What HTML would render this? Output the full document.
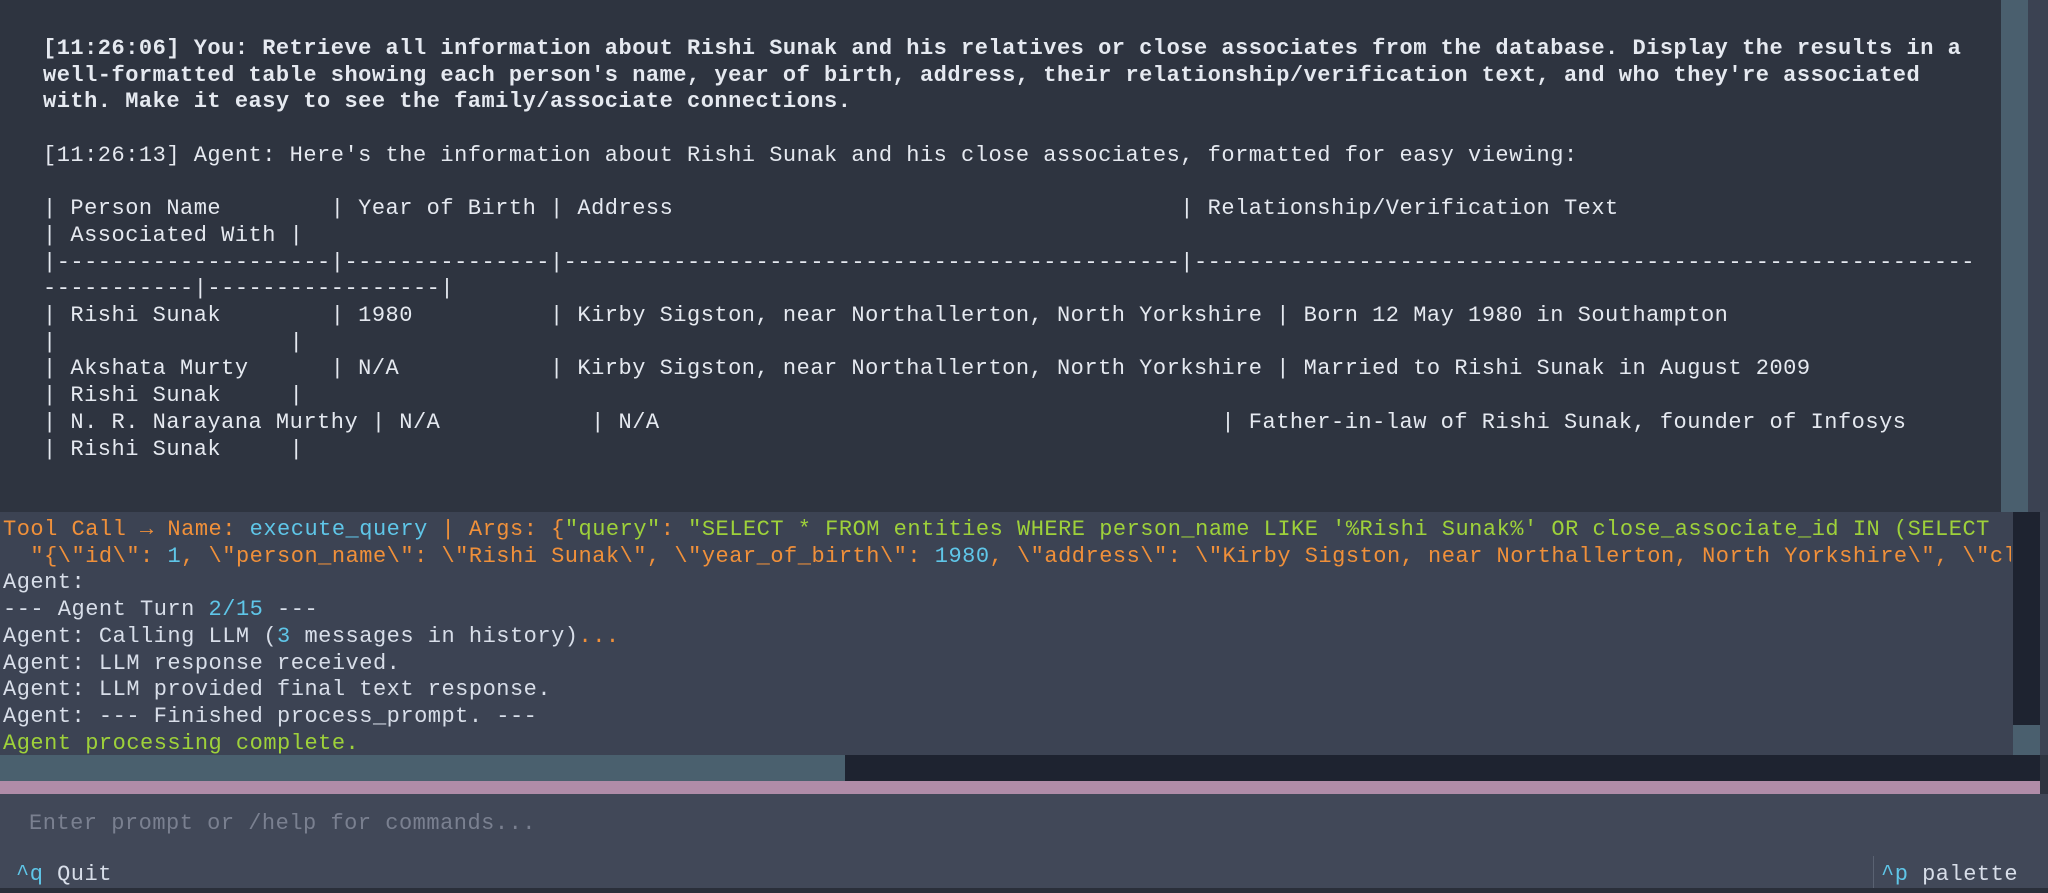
<!DOCTYPE html>
<html><head><meta charset="utf-8"><style>
*{margin:0;padding:0;box-sizing:border-box}
body{width:2048px;height:893px;overflow:hidden;background:#2e3440;font-family:"Liberation Mono","DejaVu Sans Mono",monospace;font-size:22px;letter-spacing:0.5px;color:#d8dee9;position:relative}
pre{font:inherit;white-space:pre;line-height:26.7px;overflow:hidden}
#top{position:absolute;left:0;top:0;width:2048px;height:512px;background:#2e3440}
#top pre{position:absolute;left:43px;top:36px;width:1955px;color:#e5e9f0}
#top .b{font-weight:bold}
#sb1{position:absolute;left:2001px;top:0;width:27px;height:512px;background:#4a5f6e}
#sb1r{position:absolute;left:2028px;top:0;width:20px;height:512px;background:#3b4252}
#mid{position:absolute;left:0;top:512px;width:2048px;height:243px;background:#3c4353}
#mid pre{position:absolute;left:3px;top:5px;width:2008px;color:#d8dee9}
#sb2{position:absolute;left:2013px;top:512px;width:27px;height:213px;background:#1e2330}
#sb2t{position:absolute;left:2013px;top:725px;width:27px;height:30px;background:#4a5f6e}
.o{color:#f0903a}.c{color:#5fc6e8}.g{color:#9ed13a}
#bar{position:absolute;left:0;top:755px;width:845px;height:26px;background:#4a606e}
#bar2{position:absolute;left:845px;top:755px;width:1195px;height:26px;background:#1e2330}
#pink{position:absolute;left:0;top:781px;width:2040px;height:13px;background:#b08ca8}
#inp{position:absolute;left:0;top:794px;width:2048px;height:99px;background:#414858}
#ph{position:absolute;left:29px;top:811px;color:#7a8090}
#q{position:absolute;left:16px;top:862px}
#p{position:absolute;left:1881px;top:862px}
#sep{position:absolute;left:1873px;top:856px;width:1px;height:32px;background:#5a6272}
#strip{position:absolute;left:0;top:888px;width:2048px;height:5px;background:#2a2f3a}
</style></head><body>
<div id="top"><pre><span class="b">[11:26:06] You: Retrieve all information about Rishi Sunak and his relatives or close associates from the database. Display the results in a
well-formatted table showing each person's name, year of birth, address, their relationship/verification text, and who they're associated
with. Make it easy to see the family/associate connections.</span>

[11:26:13] Agent: Here's the information about Rishi Sunak and his close associates, formatted for easy viewing:

| Person Name        | Year of Birth | Address                                     | Relationship/Verification Text
| Associated With |
|--------------------|---------------|---------------------------------------------|---------------------------------------------------------
-----------|-----------------|
| Rishi Sunak        | 1980          | Kirby Sigston, near Northallerton, North Yorkshire | Born 12 May 1980 in Southampton
|                 |
| Akshata Murty      | N/A           | Kirby Sigston, near Northallerton, North Yorkshire | Married to Rishi Sunak in August 2009
| Rishi Sunak     |
| N. R. Narayana Murthy | N/A           | N/A                                         | Father-in-law of Rishi Sunak, founder of Infosys
| Rishi Sunak     |</pre></div>
<div id="sb1"></div><div id="sb1r"></div>
<div id="mid"><pre><span class="o">Tool Call → Name: </span><span class="c">execute_query</span><span class="o"> | Args: {</span><span class="g">"query"</span><span class="o">: </span><span class="g">"SELECT * FROM entities WHERE person_name LIKE '%Rishi Sunak%' OR close_associate_id IN (SELECT</span>
<span class="o">  "{\"id\": </span><span class="c">1</span><span class="o">, \"person_name\": \"Rishi Sunak\", \"year_of_birth\": </span><span class="c">1980</span><span class="o">, \"address\": \"Kirby Sigston, near Northallerton, North Yorkshire\", \"cl</span>
Agent:
--- Agent Turn <span class="c">2/15</span> ---
Agent: Calling LLM (<span class="c">3</span> messages in history)<span class="o">...</span>
Agent: LLM response received.
Agent: LLM provided final text response.
Agent: --- Finished process_prompt. ---
<span class="g">Agent processing complete.</span></pre></div>
<div id="sb2"></div><div id="sb2t"></div>
<div id="bar"></div><div id="bar2"></div>
<div id="pink"></div>
<div id="inp"></div>
<pre id="ph">Enter prompt or /help for commands...</pre>
<pre id="q"><span class="c">^q</span> Quit</pre>
<div id="sep"></div>
<pre id="p"><span class="c">^p</span> palette</pre>
<div id="strip"></div>
</body></html>
